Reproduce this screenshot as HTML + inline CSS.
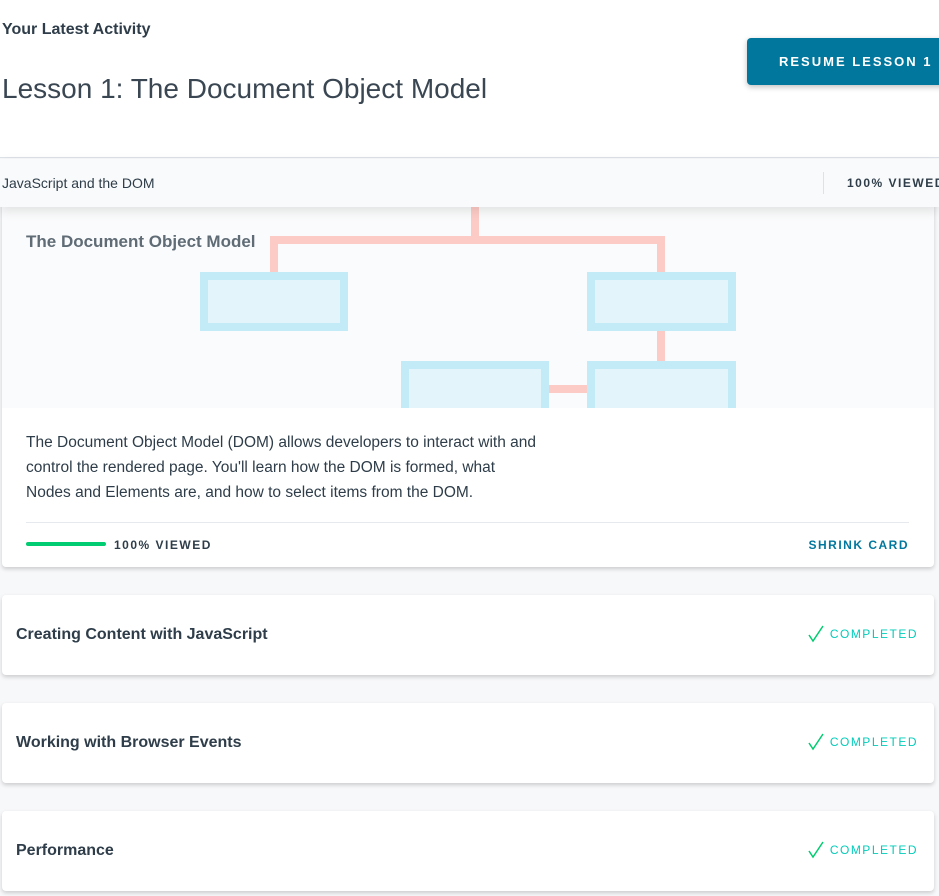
<!DOCTYPE html>
<html><head><meta charset="utf-8"><style>
*{box-sizing:border-box;margin:0;padding:0}
body{width:939px;height:896px;overflow:hidden;background:#f7f8fa;font-family:"Liberation Sans",sans-serif;color:#2e3d49;position:relative}
.top{position:absolute;left:0;top:0;width:939px;height:158px;background:#fff;border-bottom:1px solid #dde2e8}
.abs{position:absolute}
.btn{left:747px;top:38px;width:200px;height:47px;background:#02779e;border-radius:4px;color:#fff;font-size:13px;letter-spacing:2px;font-weight:bold;line-height:47px;padding-left:32px;box-shadow:0 2px 6px rgba(0,0,0,.25)}
.card{position:absolute;left:2px;width:932px;background:#fff;border-radius:4px;box-shadow:0 2px 4px rgba(0,0,0,.18)}
.comp{position:absolute;right:16px;top:25px;font-size:12px;letter-spacing:1.5px;color:#02ccba;white-space:nowrap}
.comp svg{position:relative;top:5px;margin-right:6px}
.row .t{position:absolute;left:14px;top:31px;font-size:16px;font-weight:bold;color:#2e3d49}
</style></head><body>
<div class="top"></div>
<div class="abs" style="left:2px;top:21px;font-size:16px;font-weight:bold">Your Latest Activity</div>
<div class="abs" style="left:2px;top:73px;font-size:28px;color:#3a4753">Lesson 1: The Document Object Model</div>
<div class="abs btn">RESUME LESSON 1</div>

<div class="card" style="top:200px;height:367px">
 <div class="abs" style="left:0;top:7px;width:932px;height:201px;background:#fafbfc;overflow:hidden">
  <svg width="932" height="201" style="position:absolute;left:0;top:0">
   <g fill="#fdcbc6">
    <rect x="469" y="0" width="8" height="36"/>
    <rect x="268" y="29" width="395" height="8"/>
    <rect x="268" y="29" width="8" height="40"/>
    <rect x="655" y="29" width="8" height="40"/>
    <rect x="655" y="120" width="8" height="38"/>
    <rect x="545" y="178" width="45" height="8"/>
   </g>
   <g fill="#e3f5fb" stroke="#c2eaf7" stroke-width="8">
    <rect x="202" y="69" width="140" height="51"/>
    <rect x="589" y="69" width="141" height="51"/>
    <rect x="403" y="158" width="140" height="60"/>
    <rect x="589" y="158" width="141" height="60"/>
   </g>
  </svg>
  <div class="abs" style="left:24px;top:25px;font-size:17px;font-weight:bold;color:#5f6b75">The Document Object Model</div>
 </div>
 <div class="abs" style="left:24px;top:230px;width:600px;font-size:15.5px;line-height:25px;color:#2e3d49;white-space:nowrap">The Document Object Model (DOM) allows developers to interact with and<br>control the rendered page. You'll learn how the DOM is formed, what<br>Nodes and Elements are, and how to select items from the DOM.</div>
 <div class="abs" style="left:24px;top:322px;width:883px;height:1px;background:#e6e9ed"></div>
 <div class="abs" style="left:24px;top:342px;width:80px;height:4px;border-radius:2px;background:#02cc71"></div>
 <div class="abs" style="left:112px;top:338px;font-size:12px;font-weight:bold;letter-spacing:1.5px;color:#2e3d49">100% VIEWED</div>
 <div class="abs" style="right:25px;top:338px;font-size:12px;font-weight:bold;letter-spacing:1.5px;color:#02779e">SHRINK CARD</div>
</div>

<div class="abs" style="left:0;top:159px;width:939px;height:48px;background:#f9fafb;box-shadow:0 4px 10px rgba(0,0,0,.1)">
 <div class="abs" style="left:2px;top:16px;font-size:14px">JavaScript and the DOM</div>
 <div class="abs" style="left:823px;top:13px;width:1px;height:22px;background:#dde2e8"></div>
 <div class="abs" style="left:847px;top:17px;font-size:12px;font-weight:bold;letter-spacing:1.5px;white-space:nowrap">100% VIEWED</div>
</div>

<div class="card row" style="top:595px;height:80px"><div class="t">Creating Content with JavaScript</div><div class="comp"><svg width="16" height="18" viewBox="0 0 16 18"><path d="M1 10 L5 16 L15 1" fill="none" stroke="#02cc71" stroke-width="1.5"/></svg>COMPLETED</div></div>
<div class="card row" style="top:703px;height:80px"><div class="t">Working with Browser Events</div><div class="comp"><svg width="16" height="18" viewBox="0 0 16 18"><path d="M1 10 L5 16 L15 1" fill="none" stroke="#02cc71" stroke-width="1.5"/></svg>COMPLETED</div></div>
<div class="card row" style="top:811px;height:80px"><div class="t">Performance</div><div class="comp"><svg width="16" height="18" viewBox="0 0 16 18"><path d="M1 10 L5 16 L15 1" fill="none" stroke="#02cc71" stroke-width="1.5"/></svg>COMPLETED</div></div>
</body></html>
